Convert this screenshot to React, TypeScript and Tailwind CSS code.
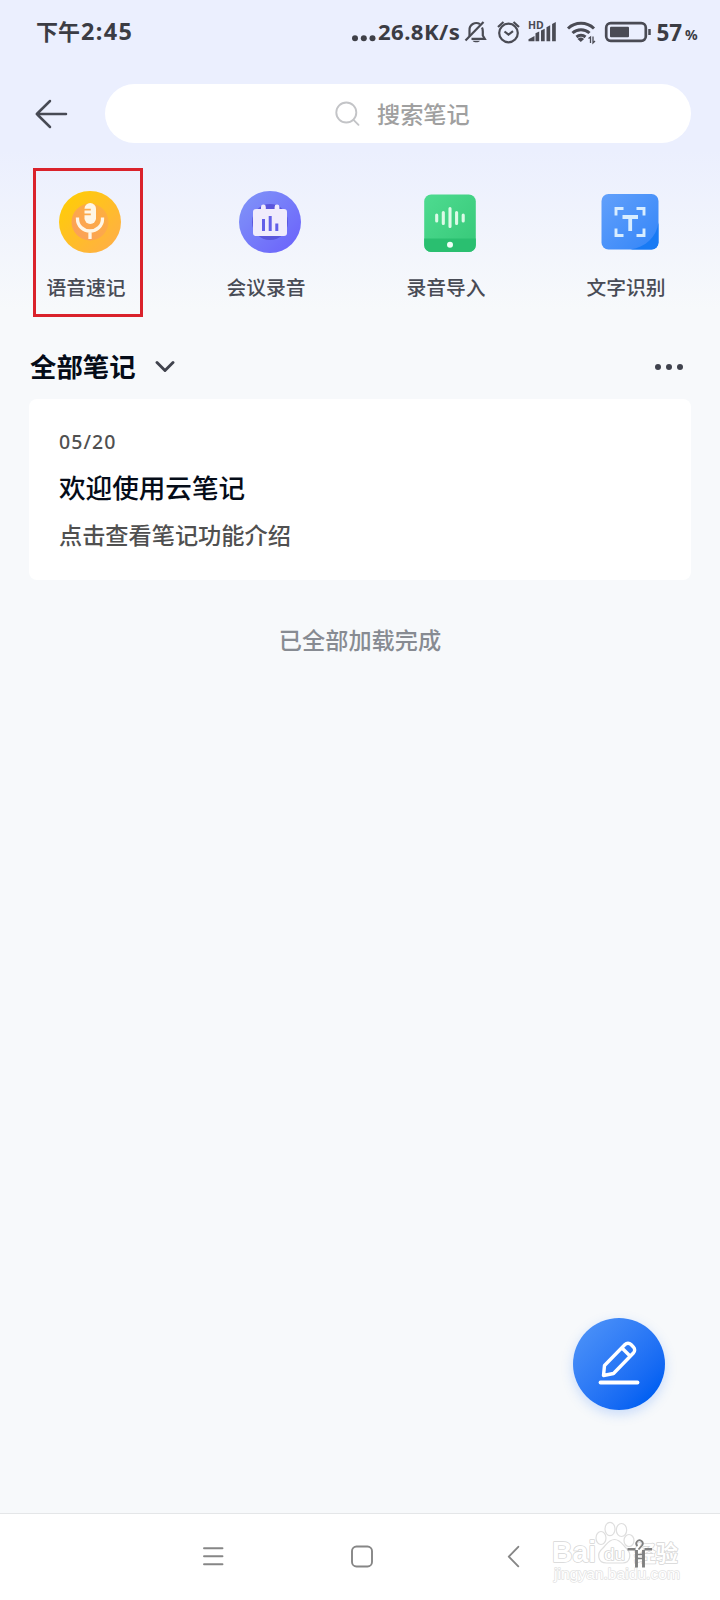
import { ReactNode } from "react";

interface ToolProps {
    label: string;
    icon: ReactNode;
    marked?: boolean;
}

const MicIcon = () => (
    <svg width="62" height="62" viewBox="0 0 62 62">
        <defs>
            <linearGradient id="mic" x1="0" y1="0" x2="1" y2="1">
                <stop offset="0" stopColor="#ffd000" />
                <stop offset="1" stopColor="#ffac4d" />
            </linearGradient>
            <linearGradient id="micInner" x1="0" y1="1" x2="1" y2="0">
                <stop offset="0" stopColor="#fb9f5c" />
                <stop offset="1" stopColor="#fdb03c" />
            </linearGradient>
        </defs>
        <circle cx="31" cy="31" r="31" fill="url(#mic)" />
        <circle cx="31" cy="31" r="18.500" fill="url(#micInner)" />
        <rect x="25.5" y="12" width="11.5" height="21" rx="5.7" fill="#fff6e6" />
        <path d="M25 18.700h6.800M25 23.300h6.800" stroke="#fba94c" strokeWidth="1.700" />
        <path d="M18.500 26.500v1.500a12.500 12 0 0 0 25 0v-1.500M31 40v8" stroke="#fff6e6" strokeWidth="3.300" fill="none" />
    </svg>
);

const MeetingIcon = () => (
    <svg width="62" height="62" viewBox="0 0 62 62">
        <defs>
            <linearGradient id="meeting" x1="0" y1="0" x2="1" y2="1">
                <stop offset="0" stopColor="#8196f8" />
                <stop offset="1" stopColor="#6a60fb" />
            </linearGradient>
        </defs>
        <circle cx="31" cy="31" r="31" fill="url(#meeting)" />
        <circle cx="31" cy="31" r="18" fill="#5a55dc" />
        <path d="M17 18h5v-2a2.400 2.400 0 0 1 4.800 0v2h8.800v-2a2.400 2.400 0 0 1 4.800 0v2H45a3 3 0 0 1 3 3v21a3 3 0 0 1-3 3H17a3 3 0 0 1-3-3V21a3 3 0 0 1 3-3z" fill="#f0ebfc" />
        <path d="M24.500 28v12M31.200 25v15M37.800 32.500V40" stroke="#635fe8" strokeWidth="3" />
    </svg>
);

const ImportIcon = () => (
    <svg width="62" height="62" viewBox="0 0 62 62">
        <defs>
            <linearGradient id="imp" x1="0" y1="0" x2="1" y2="1">
                <stop offset="0" stopColor="#4edb90" />
                <stop offset="1" stopColor="#36c878" />
            </linearGradient>
        </defs>
        <rect x="5.200" y="3.500" width="51.600" height="57.500" rx="7" fill="url(#imp)" />
        <path d="M5.200 47.500h51.600V54a7 7 0 0 1-7 7H12.200a7 7 0 0 1-7-7z" fill="#2abf70" />
        <path d="M17.700 24v6M24.300 21.500v11M31 17.500v18M37.600 21.500v11M44.200 24v6" stroke="#dcfae7" strokeWidth="3.100" strokeLinecap="round" />
        <circle cx="31" cy="53.700" r="3" fill="#f0fff6" />
    </svg>
);

const TextIcon = () => (
    <svg width="62" height="62" viewBox="0 0 62 62">
        <defs>
            <linearGradient id="ocr" x1="0" y1="0" x2="1" y2="1">
                <stop offset="0" stopColor="#62a0fb" />
                <stop offset="1" stopColor="#3385f8" />
            </linearGradient>
        </defs>
        <rect x="2.500" y="3" width="57" height="55.500" rx="7" fill="url(#ocr)" />
        <path d="M59.500 31.500V51.500a7 7 0 0 1-7 7H31.500C47 56 57.500 46 59.500 31.500z" fill="#187af4" />
        <path d="M17 24.500V17.500h7.500M37.500 17.500H45v7M45 37.500V44.500h-7.500M24.500 44.500H17v-7" stroke="#d8edff" strokeWidth="2.900" fill="none" />
        <path d="M23.500 26h15.500M31.200 26V40" stroke="#d8edff" strokeWidth="3.800" fill="none" />
    </svg>
);

const Tool = ({ label, icon, marked }: ToolProps) => {
    return (
        <div className="relative flex flex-col items-center pt-[23px]">
            {icon}
            <p className="mt-[19px] mr-2 text-[19.800px] leading-[32px] font-medium text-[#484b55]">{label}</p>
            {marked && <span className="absolute top-0 left-[33px] h-[149px] w-[110px] border-[3px] border-[#da222b]" />}
        </div>
    );
};

const StatusBar = () => (
    <div className="flex h-16 items-center justify-between pr-[18px] pl-[36px] font-bold text-[#3b3c44]">
        <p className="text-[22px]">
            下午<span className="ml-px text-[23.400px] tracking-[1.400px]">2:45</span>
        </p>
        <div className="flex items-center">
            <svg width="24" height="24" viewBox="0 0 24 24" fill="#3f4048">
                <circle cx="3" cy="18.300" r="3" />
                <circle cx="11.800" cy="18.300" r="3" />
                <circle cx="20.500" cy="18.300" r="3" />
            </svg>
            <p className="w-[86px] pl-[2px] text-[22.200px] tracking-[0.400px] whitespace-nowrap">26.8K/s</p>
            <svg width="240" height="28" viewBox="462 18 240 28" fill="none" stroke="#4a4b54" strokeWidth="2.200">
                {/* muted bell */}
                <path d="M469.500 36V30.500a6.800 6.800 0 0 1 10.500-6.300M482 27.500c.6 1.200.8 2.500.8 4v4l2 3.300H471.500" />
                <path d="M465.500 40.500L483.500 22" />
                <path d="M472.500 40.800h7.500c-1.500 2-6 2-7.500 0z" fill="#4a4b54" stroke="none" />
                {/* alarm */}
                <circle cx="508.500" cy="33" r="9.300" />
                <path d="M504.500 31.500l4 3.200 4.500-3.500M498 27l5.500-5M519 27l-5.500-5" />
                {/* mobile signal */}
                <text x="528" y="29" fill="#4a4b54" stroke="none" fontSize="10.500" fontWeight="700">HD</text>
                <path d="M528.500 41.300v-2l6-3.300v5.300zM535.500 41.300v-8l3.700-1.800v9.800zM541 41.300V30.500l3.700-1.700v12.500zM546.500 41.300v-14l3.700-2v16zM552.100 41.300V24l3.700-2v19.300z" fill="#4a4b54" stroke="none" />
                {/* wifi */}
                <path d="M568 28.500a19 19 0 0 1 26 0M572.500 33a12.500 12.500 0 0 1 17 0M576.500 37a7 7 0 0 1 9 0" strokeWidth="3" />
                <path d="M577.500 39l3.300 3 3.300-3a5 5 0 0 0-6.600 0z" fill="#4a4b54" stroke="none" />
                <path d="M588.500 38.500l2-1.500v6M593 36.500v6.500l2-2" strokeWidth="1.300" />
                {/* battery */}
                <rect x="606.200" y="23.200" width="39.600" height="17.600" rx="4.500" strokeWidth="2.700" />
                <rect x="610" y="26.700" width="19" height="10.600" rx="1" fill="#4a4b54" stroke="none" />
                <path d="M649.500 29v6" strokeWidth="2.500" />
                <text x="656.500" y="40.500" fill="#3b3c44" stroke="none" fontSize="22.500" fontWeight="700">57</text>
                <text x="685" y="40.300" fill="#3b3c44" stroke="none" fontSize="14" fontWeight="700">%</text>
            </svg>
        </div>
    </div>
);

const SearchBar = () => (
    <div className="flex items-center pt-5 pr-[29px] pl-[34px]">
        <svg width="36" height="32" viewBox="0 0 36 32" fill="none" stroke="#474a54" strokeWidth="2.500" strokeLinecap="round" strokeLinejoin="round">
            <path d="M16 3L2.800 16L16 29M2.800 16H32" />
        </svg>
        <div className="ml-[35px] flex h-[59px] flex-1 items-center rounded-full bg-white pl-[230px]">
            <svg width="26" height="26" viewBox="0 0 26 26" fill="none" stroke="#c3c4c7" strokeWidth="1.900" strokeLinecap="round">
                <circle cx="11.300" cy="11.500" r="10" />
                <path d="M18.500 18.800l5 5" />
            </svg>
            <p className="mt-[2px] ml-[16px] text-[23.200px] font-medium text-[#a0a0a0]">搜索笔记</p>
        </div>
    </div>
);

const NavBar = () => (
    <div className="relative flex h-[87px] items-center border-t border-[#e4e6e8] bg-white">
        <svg width="720" height="86" viewBox="0 1514 720 86" fill="none" stroke="#868686" strokeWidth="1.900" strokeLinecap="round" strokeLinejoin="round">
            <path d="M204 1548.300h18.500M204 1556.300h18.500M204 1564.300h18.500" />
            <rect x="352" y="1546.500" width="20" height="20" rx="4.500" />
            <path d="M518.300 1546.800L508.800 1556.700L518.300 1566.300" />
            {/* watermark */}
            <g fill="#fff" stroke="#dedede" strokeWidth="1.200">
                <ellipse cx="601" cy="1538" rx="5" ry="6.500" />
                <ellipse cx="610" cy="1529" rx="5" ry="6.700" />
                <ellipse cx="621.500" cy="1530" rx="5.200" ry="6.500" />
                <ellipse cx="629" cy="1540.500" rx="5" ry="6" />
                <path d="M614.500 1539.500c6 0 8 5 12 9 5.500 5 4 14.500-4 14.500h-16c-9 0-10-9.500-4-14.500 4-4 6-9 12-9z" />
            </g>
            <g fill="#fff" stroke="#d6d6d6" strokeWidth="1.500" paintOrder="stroke" fontWeight="700" className="font-['Liberation_Sans','Noto_Sans_CJK_SC',sans-serif]">
                <text x="552" y="1562" fontSize="29" textLength="44" lengthAdjust="spacingAndGlyphs">Bai</text>
                <text x="604" y="1560" fontSize="16" textLength="21" lengthAdjust="spacingAndGlyphs" fontWeight="400">du</text>
                <text x="634" y="1561" fontSize="22" textLength="44">经验</text>
                <text x="554" y="1578.500" fontSize="14" textLength="126" stroke="#e2e2e2" strokeWidth="1.300" fontWeight="400" lengthAdjust="spacingAndGlyphs">jingyan.baidu.com</text>
            </g>
            {/* accessibility figure */}
            <g stroke="#808080" strokeLinecap="butt">
                <path d="M637.500 1546a3.200 3.200 0 1 1 4.500-.5l-3.500 4" strokeWidth="1.700" />
                <path d="M627.500 1549.300h8M644.500 1549.300h7.500" strokeWidth="2.600" />
                <path d="M636.500 1550v17.500M643.500 1550v17.500" strokeWidth="2.900" />
                <path d="M636 1554.500h8M636 1558.500h8" strokeWidth="1.600" />
            </g>
        </svg>
    </div>
);

const App = () => {
    return (
        <div className="relative flex h-[1600px] w-[720px] flex-col bg-[#f7f9fb] bg-[linear-gradient(180deg,#ebeffe_0px,#ebeffe_150px,#f7f9fb_310px)] font-['Noto_Sans','Noto_Sans_CJK_SC',sans-serif]">
            <StatusBar />
            <SearchBar />
            <div className="mt-[25px] grid grid-cols-4">
                <Tool label="语音速记" icon={<MicIcon />} marked />
                <Tool label="会议录音" icon={<MeetingIcon />} />
                <Tool label="录音导入" icon={<ImportIcon />} />
                <Tool label="文字识别" icon={<TextIcon />} />
            </div>
            <div className="mt-[43px] flex h-10 items-center justify-between pr-[37px] pl-[30px]">
                <div className="flex items-center">
                    <h1 className="mt-[2px] text-[26.400px] font-bold text-[#050c18]">全部笔记</h1>
                    <svg width="20" height="14" viewBox="0 0 20 14" className="ml-[19px]" fill="none" stroke="#40434d" strokeWidth="2.900" strokeLinecap="round" strokeLinejoin="round">
                        <path d="M2 2.500l8 8 8-8" />
                    </svg>
                </div>
                <div className="flex gap-[5px]">
                    <span className="size-[6px] rounded-full bg-[#40434d]" />
                    <span className="size-[6px] rounded-full bg-[#40434d]" />
                    <span className="size-[6px] rounded-full bg-[#40434d]" />
                </div>
            </div>
            <div className="mt-[12px] mr-[29px] ml-[29px] h-[181px] rounded-lg bg-white pt-[28px] pl-[30px]">
                <p className="text-[19.500px] leading-[30px] font-medium tracking-[1.100px] text-[#505050]">05/20</p>
                <p className="mt-[12px] text-[26.600px] leading-[38px] font-medium text-[#050c18]">欢迎使用云笔记</p>
                <p className="mt-[11px] text-[23.200px] leading-[34px] font-medium text-[#505050]">点击查看笔记功能介绍</p>
            </div>
            <p className="mt-[43px] text-center text-[23.200px] leading-[34px] font-medium text-[#878b92]">已全部加载完成</p>
            <button className="absolute top-[1318px] left-[573px] flex size-[92px] items-center justify-center rounded-full bg-linear-to-br from-[#4a90f8] from-10% to-[#0160f2] to-85% shadow-[0_4px_12px_rgba(60,130,250,0.250)]">
                <svg width="44" height="46" viewBox="0 0 44 46" className="mb-[2px]" fill="none" stroke="#fff" strokeWidth="3.400" strokeLinecap="round" strokeLinejoin="round">
                    <path d="M6.500 35.500L7.500 25.500L28 4.500a4.200 4.200 0 0 1 6 0l2.400 2.500a4.200 4.200 0 0 1 0 6L16.500 33.500zM25 8l8 8" />
                    <path d="M3.500 42.500h37" strokeWidth="3.800" />
                </svg>
            </button>
            <div className="flex-1" />
            <NavBar />
        </div>
    );
};

export default App;
